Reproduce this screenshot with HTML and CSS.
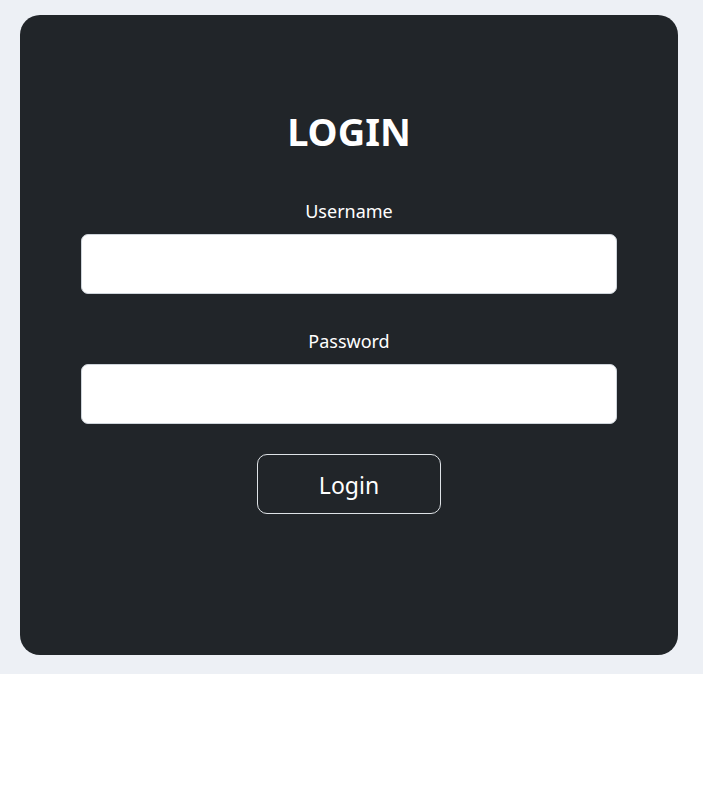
FILE: index.html
```html
<!DOCTYPE html>
<html lang="en">
<head>
<meta charset="utf-8">
<title>Login</title>
<link rel="stylesheet" href="styles.css">
</head>
<body>
<div class="page">
  <div class="card">
    <h1 class="title">LOGIN</h1>
    <form class="form">
      <label class="label" for="username">Username</label>
      <input class="input" id="username" type="text">
      <label class="label label-gap" for="password">Password</label>
      <input class="input" id="password" type="password">
      <button class="btn" type="button">Login</button>
    </form>
  </div>
</div>
</body>
</html>
```
FILE: styles.css
```css
html, body {
  margin: 0;
  padding: 0;
  background: #ffffff;
}
body {
  font-family: "Noto Sans", "Open Sans", sans-serif;
}
.page {
  background: #edf0f5;
  padding: 15px 25px 19px 20px;
}
.card {
  background: #212529;
  border-radius: 20px;
  height: 640px;
  box-sizing: border-box;
  padding: 92px 61px 0;
  display: flex;
  flex-direction: column;
  align-items: center;
}
.title {
  margin: 0;
  color: #ffffff;
  font-size: 38px;
  font-weight: 700;
  line-height: 48px;
  height: 48px;
}
.form {
  width: 100%;
  display: flex;
  flex-direction: column;
  align-items: center;
  margin-top: 43px;
}
.label {
  color: #ffffff;
  font-size: 18px;
  line-height: 27px;
  margin-bottom: 9px;
}
.label-gap {
  margin-top: 34px;
}
.input {
  width: 100%;
  height: 60px;
  box-sizing: border-box;
  border: 1px solid #ced4da;
  border-radius: 7px;
  background: #ffffff;
  font-size: 18px;
  padding: 0 12px;
}
.btn {
  margin-top: 30px;
  width: 184px;
  height: 60px;
  padding: 2px 0 0;
  background: transparent;
  color: #ffffff;
  border: 1px solid #dee2e6;
  border-radius: 10px;
  font-family: inherit;
  font-size: 23px;
}
```
